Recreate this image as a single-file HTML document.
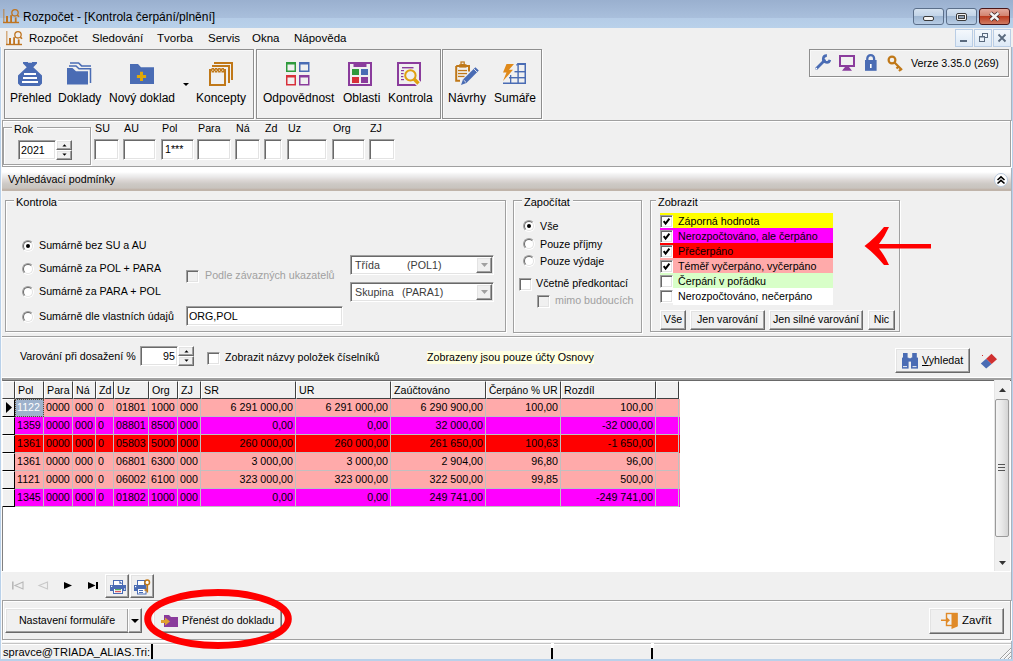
<!DOCTYPE html>
<html><head><meta charset="utf-8"><style>
*{box-sizing:border-box;margin:0;padding:0}
html,body{width:1013px;height:661px;overflow:hidden;background:#f0f0f0;font-family:"Liberation Sans",sans-serif;font-size:11px;color:#000}
.a{position:absolute}
.t{position:absolute;white-space:nowrap;line-height:13px}
svg{position:absolute;overflow:visible}
.wb{position:absolute;top:8px;height:17px;width:31px;border:1px solid #5b6f8a;border-radius:3px;background:linear-gradient(#d5e2f0,#c2d4e8 45%,#9fb7d3 50%,#b7cce4)}
.wbc{border-color:#4a1618;background:linear-gradient(#e3a99c,#d38470 45%,#bb3c20 50%,#d07b62)}
.mdi{position:absolute;top:29px;height:18px;width:18px;border:1px solid #b9cde5;background:linear-gradient(#f4f8fc,#dde9f6)}
.tg{position:absolute;border:1px solid #8e8e8e;box-shadow:inset 1px 1px 0 #f8f8f8,1px 1px 0 #fff}
.gb{position:absolute;border:1px solid #a0a0a0;box-shadow:1px 1px 0 #fff, inset 1px 1px 0 #fff}
.inp{position:absolute;background:#fff;border-top:1px solid #a0a0a0;border-left:1px solid #a0a0a0;border-right:1px solid #fff;border-bottom:1px solid #fff;box-shadow:inset 1px 1px 0 #696969}
.btn{position:absolute;background:#f0f0f0;border-top:1px solid #fff;border-left:1px solid #fff;border-right:1px solid #696969;border-bottom:1px solid #696969;box-shadow:inset -1px -1px 0 #a0a0a0}
</style></head><body>
<div class="a" style="left:0px;top:0px;width:1013px;height:28px;background:linear-gradient(#9ab0cf 0%,#a9bfdc 64%,#b5cce7 66%,#b9d1ea 100%)"></div>
<div class="a" style="left:0px;top:47px;width:1px;height:614px;background:#b9d1ea"></div>
<div class="a" style="left:1px;top:47px;width:1px;height:612px;background:#fafafa"></div>
<div class="a" style="left:1011px;top:47px;width:1px;height:612px;background:#a9b4bf"></div>
<div class="a" style="left:1012px;top:47px;width:1px;height:614px;background:#b9d1ea"></div>
<div class="a" style="left:0px;top:659px;width:1013px;height:2px;background:#b9d1ea"></div>
<svg style="left:3px;top:9px" width="17" height="14" viewBox="0 0 17 14"><g fill="#bf7420">
<rect x="0" y="0" width="1.5" height="14" opacity="0.55"/>
<rect x="0" y="12.8" width="16" height="1.4"/>
<rect x="3" y="7" width="2" height="6"/>
<rect x="7.2" y="6.2" width="1.8" height="6.8"/>
<rect x="11.8" y="8.4" width="1.8" height="4.6"/>
</g><circle cx="12" cy="3.8" r="3.2" fill="none" stroke="#bf7420" stroke-width="1.3"/><line x1="14.3" y1="6.1" x2="16" y2="7.8" stroke="#bf7420" stroke-width="1.6"/></svg>
<div class="t" style="left:23px;top:10px;font-size:12px;line-height:14px">Rozpočet - [Kontrola čerpání/plnění]</div>
<div class="wb" style="left:913px"></div><div class="wb" style="left:946px"></div><div class="wb wbc" style="left:979px"></div>
<div class="a" style="left:923px;top:16px;width:11px;height:5px;background:#f4f4f4;border:1px solid #3a3a3a;border-radius:2px"></div>
<div class="a" style="left:956px;top:13px;width:11px;height:8px;border:1px solid #3a3a3a;border-radius:2px;background:#f4f4f4"></div>
<div class="a" style="left:958px;top:15px;width:7px;height:4px;border:1px solid #444;background:#8d9db0"></div>
<svg style="left:989px;top:12px" width="11" height="9" viewBox="0 0 11 9"><path d="M1.5 1 L9.5 8 M9.5 1 L1.5 8" stroke="#3a2020" stroke-width="4"/><path d="M1.5 1 L9.5 8 M9.5 1 L1.5 8" stroke="#f4f4f4" stroke-width="2.4"/></svg>
<svg style="left:6px;top:31px" width="17" height="14" viewBox="0 0 17 14"><g fill="#bf7420">
<rect x="0" y="0" width="1.5" height="14" opacity="0.55"/>
<rect x="0" y="12.8" width="16" height="1.4"/>
<rect x="3" y="7" width="2" height="6"/>
<rect x="7.2" y="6.2" width="1.8" height="6.8"/>
<rect x="11.8" y="8.4" width="1.8" height="4.6"/>
</g><circle cx="12" cy="3.8" r="3.2" fill="none" stroke="#bf7420" stroke-width="1.3"/><line x1="14.3" y1="6.1" x2="16" y2="7.8" stroke="#bf7420" stroke-width="1.6"/></svg>
<div class="t" style="left:29px;top:31px;font-size:11.5px;line-height:14px">Rozpočet</div>
<div class="t" style="left:92px;top:31px;font-size:11.5px;line-height:14px">Sledování</div>
<div class="t" style="left:157px;top:31px;font-size:11.5px;line-height:14px">Tvorba</div>
<div class="t" style="left:208px;top:31px;font-size:11.5px;line-height:14px">Servis</div>
<div class="t" style="left:252px;top:31px;font-size:11.5px;line-height:14px">Okna</div>
<div class="t" style="left:294px;top:31px;font-size:11.5px;line-height:14px">Nápověda</div>
<div class="mdi" style="left:955px"></div><div class="mdi" style="left:974px"></div><div class="mdi" style="left:993px"></div>
<div class="a" style="left:960px;top:40px;width:7px;height:2px;background:#5a6a7e"></div>
<svg style="left:979px;top:33px" width="9" height="9" viewBox="0 0 9 9"><rect x="3.5" y="0.5" width="5" height="4" fill="none" stroke="#5a6a7e"/><rect x="0.5" y="3.5" width="5" height="5" fill="#eaf1f9" stroke="#5a6a7e"/><rect x="0" y="3" width="6" height="1.5" fill="#5a6a7e"/></svg>
<svg style="left:998px;top:34px" width="8" height="8" viewBox="0 0 8 8"><path d="M0.5 0.5 L7.5 7.5 M7.5 0.5 L0.5 7.5" stroke="#5a6a7e" stroke-width="1.8"/></svg>
<div class="tg" style="left:4px;top:49px;width:250px;height:70px"></div>
<div class="tg" style="left:256px;top:49px;width:185px;height:70px"></div>
<div class="tg" style="left:442px;top:49px;width:100px;height:70px"></div>
<svg style="left:14px;top:58px" width="32" height="32" viewBox="0 0 32 32"><path fill="#4a6cb4" d="M9 4 H14 V4.7 H18 V4 H23 V5.6 L19.3 9.3 L28 17.5 V25.5 L25.5 28 H6.5 L4 25.5 V17.5 L12.7 9.3 L9 5.6 Z"/>
<g fill="#fff"><rect x="10" y="15" width="12" height="2"/><rect x="9" y="19" width="14" height="2"/><rect x="8" y="23" width="16" height="2"/></g></svg>
<svg style="left:62px;top:58px" width="32" height="32" viewBox="0 0 32 32"><g fill="none" stroke="#4a6cb4" stroke-width="1.5"><path d="M8 4.9 H16.6 L19.6 7.9 H29"/><path d="M7 7.9 H14 L17 10.8 H28.5 V25"/></g><path d="M5 10 H10.5 L14 13.3 H26 V26.5 H5 Z" fill="#4a6cb4"/></svg>
<svg style="left:130px;top:64px" width="24" height="20" viewBox="0 0 24 20"><path d="M0 0 H8 L11 3.2 H24 V20 H0 Z" fill="#4a6cb4"/><path d="M10 7.8 H13 V10.9 H16.1 V13.9 H13 V17 H10 V13.9 H6.9 V10.9 H10 Z" fill="#e0a808"/></svg>
<svg style="left:183px;top:83px" width="6" height="3" viewBox="0 0 6 3"><path d="M0 0 H6 L3 3 Z" fill="#000"/></svg>
<svg style="left:205px;top:58px" width="32" height="32" viewBox="0 0 32 32"><g fill="none" stroke="#c07818" stroke-width="2"><rect x="5" y="12" width="15" height="15"/><path d="M7 8 H24 V25"/><path d="M9 5 H27 V22"/></g><g fill="#c07818"><rect x="6.5" y="10" width="2.6" height="4.5"/><rect x="9.8" y="10" width="2.6" height="4.5"/><rect x="13.1" y="10" width="2.6" height="4.5"/><rect x="16.4" y="10" width="2.6" height="4.5"/></g><g fill="#f0f0f0"><rect x="7.3" y="11.6" width="1" height="1.2"/><rect x="10.6" y="11.6" width="1" height="1.2"/><rect x="13.9" y="11.6" width="1" height="1.2"/><rect x="17.2" y="11.6" width="1" height="1.2"/></g></svg>
<div class="t" style="left:10px;top:91px;font-size:12px;line-height:14px">Přehled</div>
<div class="t" style="left:58px;top:91px;font-size:12px;line-height:14px">Doklady</div>
<div class="t" style="left:109px;top:91px;font-size:12px;line-height:14px">Nový doklad</div>
<div class="t" style="left:196px;top:91px;font-size:12px;line-height:14px">Koncepty</div>
<svg style="left:286px;top:62px" width="24" height="24" viewBox="0 0 24 24"><path d="M0 0 H10 V10 H0 Z M1.5 2.5 V8.5 H8.5 V2.5 Z" fill="#2e9a3c" fill-rule="evenodd"/><path d="M13 0 H23.5 V10 H13 Z M14.5 2.5 V8.5 H22.0 V2.5 Z" fill="#4a6cb4" fill-rule="evenodd"/><path d="M0 13 H10 V23.5 H0 Z M1.5 15.5 V22.0 H8.5 V15.5 Z" fill="#d8303a" fill-rule="evenodd"/><path d="M13 13 H23.5 V23.5 H13 Z M14.5 15.5 V22.0 H22.0 V15.5 Z" fill="#8a3c9c" fill-rule="evenodd"/></svg>
<svg style="left:348px;top:62px" width="24" height="24" viewBox="0 0 24 24"><rect x="1" y="1" width="22" height="22" fill="none" stroke="#8a3c9c" stroke-width="2"/><rect x="5.5" y="1" width="13" height="4" fill="#8a3c9c"/>
<rect x="4" y="7" width="7" height="6" fill="#2e9a3c"/><rect x="13" y="7" width="7" height="6" fill="#4a6cb4"/><rect x="4" y="15" width="7" height="6" fill="#d8303a"/><rect x="13" y="15" width="7" height="6" fill="#8a3c9c"/></svg>
<svg style="left:397px;top:62px" width="24" height="24" viewBox="0 0 24 24"><rect x="1" y="1" width="22" height="22" fill="none" stroke="#8a3c9c" stroke-width="2"/><g fill="#8a3c9c"><rect x="5" y="5" width="11.5" height="1.4"/><rect x="4" y="8" width="3" height="1.2"/><rect x="4" y="11" width="2.6" height="1.2"/><rect x="4" y="14" width="2.4" height="1.2"/><rect x="4" y="17" width="3" height="1.2"/></g>
<path d="M17 17 L24 24" stroke="#f0f0f0" stroke-width="6"/><circle cx="13.4" cy="13.4" r="5.2" fill="#f0f0f0" stroke="#e0a010" stroke-width="2"/><path d="M16.8 16.8 L21.5 21.5" stroke="#e0a010" stroke-width="3.4"/></svg>
<div class="t" style="left:263px;top:91px;font-size:12px;line-height:14px">Odpovědnost</div>
<div class="t" style="left:343px;top:91px;font-size:12px;line-height:14px">Oblasti</div>
<div class="t" style="left:388px;top:91px;font-size:12px;line-height:14px">Kontrola</div>
<svg style="left:451px;top:58px" width="32" height="32" viewBox="0 0 32 32"><path d="M5.2 8 H18 V13.5 M9 22.8 H5.2 V8" fill="none" stroke="#c07818" stroke-width="2"/><rect x="8.2" y="6.2" width="7.3" height="3.4" fill="#c07818"/><rect x="10" y="4" width="3.2" height="2.5" fill="none" stroke="#c07818" stroke-width="1.2"/>
<g fill="#c07818"><rect x="7" y="11.9" width="9" height="1.3"/><rect x="7" y="14.9" width="9" height="1.3"/><rect x="7" y="17.8" width="6.5" height="1.3"/></g>
<path d="M24.4 9.2 L27.8 12.6 L15.4 25 L10 27 L12 21.6 Z" fill="#4a6cb4"/><path d="M12.6 22 L15 24.4 M23 11 L26 14" stroke="#f0f0f0" stroke-width="0.9"/></svg>
<svg style="left:498px;top:58px" width="32" height="32" viewBox="0 0 32 32"><path d="M8.5 6 H16 L11 11.8 H15 L5 23 L8.5 14.5 H5 Z" fill="#e08a1a"/><g fill="#4a6cb4"><rect x="19.4" y="5" width="1.4" height="21"/><rect x="26.5" y="5" width="1.5" height="21"/><rect x="19.4" y="5" width="8.6" height="2"/><rect x="18.2" y="6.2" width="1.5" height="1.3"/><rect x="16.5" y="13" width="11.5" height="1.4"/><rect x="11" y="19" width="17" height="1.4"/><rect x="5" y="24.5" width="23" height="1.5"/><rect x="12" y="17" width="1.3" height="8.5"/></g></svg>
<div class="t" style="left:448px;top:91px;font-size:12px;line-height:14px">Návrhy</div>
<div class="t" style="left:494px;top:91px;font-size:12px;line-height:14px">Sumáře</div>
<div class="tg" style="left:809px;top:49px;width:200px;height:28px"></div>
<svg style="left:810px;top:50px" width="100" height="26" viewBox="0 0 100 26"><path d="M6.5 18.5 L14.5 10.5" stroke="#4a6cb4" stroke-width="2.8" stroke-linecap="round"/><path d="M19.9 9.9 A3.4 3.4 0 1 1 16.9 5.6" fill="none" stroke="#4a6cb4" stroke-width="2.6"/><circle cx="6.3" cy="18.7" r="0.9" fill="#fff"/>
<rect x="30" y="6" width="14" height="10" fill="none" stroke="#8a3c9c" stroke-width="2"/><path d="M35 17 H39 L42 20.8 H32 Z" fill="#8a3c9c"/>
<path d="M57.3 10.5 V8.5 A3.4 3.4 0 0 1 64.1 8.5 V10.5" fill="none" stroke="#4a6cb4" stroke-width="2.3"/><rect x="55" y="10" width="11.6" height="10.8" fill="#4a6cb4"/><rect x="60" y="14" width="1.6" height="4" fill="#fff"/>
<circle cx="82" cy="10" r="3.4" fill="none" stroke="#c07818" stroke-width="2.2"/><path d="M84.5 12.5 L92 20 M88.5 16.5 L86.5 18.5 M91 19 L89 21" stroke="#c07818" stroke-width="2.2"/></svg>
<div class="t" style="left:911px;top:56px;font-size:10.7px;line-height:14px">Verze 3.35.0 (269)</div>
<div class="a" style="left:2px;top:120px;width:1009px;height:47px;border:1px solid #a0a0a0;box-shadow:inset 1px 1px 0 #fff,1px 1px 0 #fff"></div>
<div class="gb" style="left:3px;top:127px;width:88px;height:38px"></div>
<div class="a" style="left:12px;top:122px;width:25px;height:12px;background:#f0f0f0"></div>
<div class="t" style="left:14px;top:123px;font-size:10.7px;">Rok</div>
<div class="a" style="left:18px;top:140px;width:38px;height:20px;background:#fff;border-top:1px solid #a0a0a0;border-left:1px solid #a0a0a0;border-right:1px solid #fff;border-bottom:1px solid #fff;box-shadow:inset 1px 1px 0 #696969, inset -1px -1px 0 #e3e3e3;"></div>
<div class="t" style="left:21px;top:144px;font-size:10.7px;">2021</div>
<div class="a" style="left:56px;top:140px;width:16px;height:10px;background:#f0f0f0;border-top:1px solid #fff;border-left:1px solid #fff;border-right:1px solid #696969;border-bottom:1px solid #696969;box-shadow:inset -1px -1px 0 #a0a0a0, inset 1px 1px 0 #e3e3e3;"></div>
<div class="a" style="left:56px;top:150px;width:16px;height:10px;background:#f0f0f0;border-top:1px solid #fff;border-left:1px solid #fff;border-right:1px solid #696969;border-bottom:1px solid #696969;box-shadow:inset -1px -1px 0 #a0a0a0, inset 1px 1px 0 #e3e3e3;"></div>
<svg style="left:62px;top:144px" width="5" height="3" viewBox="0 0 5 3"><path d="M2.5 0.3 L4.6 2.6 H0.4 Z" fill="#000"/></svg>
<svg style="left:62px;top:153px" width="5" height="3" viewBox="0 0 5 3"><path d="M0.4 0.4 H4.6 L2.5 2.7 Z" fill="#000"/></svg>
<div class="t" style="left:95px;top:122px;font-size:10.7px;">SU</div>
<div class="a" style="left:94px;top:139px;width:25px;height:21px;background:#fff;border-top:1px solid #a0a0a0;border-left:1px solid #a0a0a0;border-right:1px solid #fff;border-bottom:1px solid #fff;box-shadow:inset 1px 1px 0 #696969, inset -1px -1px 0 #e3e3e3;"></div>
<div class="t" style="left:124px;top:122px;font-size:10.7px;">AU</div>
<div class="a" style="left:123px;top:139px;width:33px;height:21px;background:#fff;border-top:1px solid #a0a0a0;border-left:1px solid #a0a0a0;border-right:1px solid #fff;border-bottom:1px solid #fff;box-shadow:inset 1px 1px 0 #696969, inset -1px -1px 0 #e3e3e3;"></div>
<div class="t" style="left:162px;top:122px;font-size:10.7px;">Pol</div>
<div class="a" style="left:161px;top:139px;width:33px;height:21px;background:#fff;border-top:1px solid #a0a0a0;border-left:1px solid #a0a0a0;border-right:1px solid #fff;border-bottom:1px solid #fff;box-shadow:inset 1px 1px 0 #696969, inset -1px -1px 0 #e3e3e3;"></div>
<div class="t" style="left:198px;top:122px;font-size:10.7px;">Para</div>
<div class="a" style="left:197px;top:139px;width:34px;height:21px;background:#fff;border-top:1px solid #a0a0a0;border-left:1px solid #a0a0a0;border-right:1px solid #fff;border-bottom:1px solid #fff;box-shadow:inset 1px 1px 0 #696969, inset -1px -1px 0 #e3e3e3;"></div>
<div class="t" style="left:236px;top:122px;font-size:10.7px;">Ná</div>
<div class="a" style="left:235px;top:139px;width:25px;height:21px;background:#fff;border-top:1px solid #a0a0a0;border-left:1px solid #a0a0a0;border-right:1px solid #fff;border-bottom:1px solid #fff;box-shadow:inset 1px 1px 0 #696969, inset -1px -1px 0 #e3e3e3;"></div>
<div class="t" style="left:265px;top:122px;font-size:10.7px;">Zd</div>
<div class="a" style="left:264px;top:139px;width:18px;height:21px;background:#fff;border-top:1px solid #a0a0a0;border-left:1px solid #a0a0a0;border-right:1px solid #fff;border-bottom:1px solid #fff;box-shadow:inset 1px 1px 0 #696969, inset -1px -1px 0 #e3e3e3;"></div>
<div class="t" style="left:288px;top:122px;font-size:10.7px;">Uz</div>
<div class="a" style="left:287px;top:139px;width:40px;height:21px;background:#fff;border-top:1px solid #a0a0a0;border-left:1px solid #a0a0a0;border-right:1px solid #fff;border-bottom:1px solid #fff;box-shadow:inset 1px 1px 0 #696969, inset -1px -1px 0 #e3e3e3;"></div>
<div class="t" style="left:333px;top:122px;font-size:10.7px;">Org</div>
<div class="a" style="left:332px;top:139px;width:33px;height:21px;background:#fff;border-top:1px solid #a0a0a0;border-left:1px solid #a0a0a0;border-right:1px solid #fff;border-bottom:1px solid #fff;box-shadow:inset 1px 1px 0 #696969, inset -1px -1px 0 #e3e3e3;"></div>
<div class="t" style="left:370px;top:122px;font-size:10.7px;">ZJ</div>
<div class="a" style="left:369px;top:139px;width:26px;height:21px;background:#fff;border-top:1px solid #a0a0a0;border-left:1px solid #a0a0a0;border-right:1px solid #fff;border-bottom:1px solid #fff;box-shadow:inset 1px 1px 0 #696969, inset -1px -1px 0 #e3e3e3;"></div>
<div class="t" style="left:165px;top:143px;font-size:10.7px;">1***</div>
<div class="a" style="left:2px;top:167px;width:1009px;height:24px;background:linear-gradient(#fff 0px,#fff 5px,#f4f4f4 7px,#e9e8e8 10px,#ddd8d6 13px,#cdc9c5 17px,#c8c3be 21px,#c0b4aa 22.5px,#c0b4aa 24px)"></div>
<div class="t" style="left:8px;top:173px;font-size:10.7px;">Vyhledávací podmínky</div>
<svg style="left:994px;top:173px" width="14" height="14" viewBox="0 0 14 14"><circle cx="7" cy="7" r="6.5" fill="#fff" stroke="#b8c8dc" stroke-width="1"/><path d="M3.5 7 L7 3.8 L10.5 7 M3.5 10.5 L7 7.3 L10.5 10.5" fill="none" stroke="#000" stroke-width="1.6"/></svg>
<div class="a" style="left:2px;top:191px;width:1009px;height:146px;border-bottom:1px solid #a0a0a0;box-shadow:0 1px 0 #fff"></div>
<div class="gb" style="left:5px;top:200px;width:501px;height:132px"></div>
<div class="a" style="left:14px;top:194px;width:44px;height:12px;background:#f0f0f0"></div>
<div class="t" style="left:16px;top:196px;font-size:11px;line-height:13px">Kontrola</div>
<div class="a" style="left:22px;top:240px;width:12px;height:12px;border-radius:50%;border:1px solid;border-color:#a0a0a0 #fff #fff #a0a0a0;transform:rotate(0deg)"><div style="width:10px;height:10px;border-radius:50%;border:1px solid;border-color:#696969 #e3e3e3 #e3e3e3 #696969;background:#fff"></div></div>
<div class="a" style="left:26px;top:244px;width:4px;height:4px;border-radius:50%;background:#000"></div>
<div class="t" style="left:39px;top:239px;font-size:10.7px;">Sumárně bez SU a AU</div>
<div class="a" style="left:22px;top:263px;width:12px;height:12px;border-radius:50%;border:1px solid;border-color:#a0a0a0 #fff #fff #a0a0a0;transform:rotate(0deg)"><div style="width:10px;height:10px;border-radius:50%;border:1px solid;border-color:#696969 #e3e3e3 #e3e3e3 #696969;background:#fff"></div></div>
<div class="t" style="left:39px;top:262px;font-size:10.7px;">Sumárně za POL + PARA</div>
<div class="a" style="left:22px;top:286px;width:12px;height:12px;border-radius:50%;border:1px solid;border-color:#a0a0a0 #fff #fff #a0a0a0;transform:rotate(0deg)"><div style="width:10px;height:10px;border-radius:50%;border:1px solid;border-color:#696969 #e3e3e3 #e3e3e3 #696969;background:#fff"></div></div>
<div class="t" style="left:39px;top:285px;font-size:10.7px;">Sumárně za PARA + POL</div>
<div class="a" style="left:22px;top:311px;width:12px;height:12px;border-radius:50%;border:1px solid;border-color:#a0a0a0 #fff #fff #a0a0a0;transform:rotate(0deg)"><div style="width:10px;height:10px;border-radius:50%;border:1px solid;border-color:#696969 #e3e3e3 #e3e3e3 #696969;background:#fff"></div></div>
<div class="t" style="left:39px;top:310px;font-size:10.7px;">Sumárně dle vlastních údajů</div>
<div class="a" style="left:186px;top:270px;width:13px;height:13px;background:#f0f0f0;border-top:1px solid #a0a0a0;border-left:1px solid #a0a0a0;border-right:1px solid #fff;border-bottom:1px solid #fff;box-shadow:inset 1px 1px 0 #696969, inset -1px -1px 0 #e3e3e3"></div>
<div class="t" style="left:205px;top:269px;font-size:10.7px;color:#a0a0a0">Podle závazných ukazatelů</div>
<div class="a" style="left:186px;top:306px;width:157px;height:20px;background:#fff;border-top:1px solid #a0a0a0;border-left:1px solid #a0a0a0;border-right:1px solid #fff;border-bottom:1px solid #fff;box-shadow:inset 1px 1px 0 #696969, inset -1px -1px 0 #e3e3e3;"></div>
<div class="t" style="left:189px;top:310px;font-size:10.7px;">ORG,POL</div>
<div class="a" style="left:350px;top:255px;width:144px;height:20px;background:#fff;border-top:1px solid #a0a0a0;border-left:1px solid #a0a0a0;border-right:1px solid #fff;border-bottom:1px solid #fff;box-shadow:inset 1px 1px 0 #696969, inset -1px -1px 0 #e3e3e3;"></div>
<div class="t" style="left:355px;top:259px;font-size:10.7px;color:#3c3c3c">Třída</div>
<div class="t" style="left:407px;top:259px;font-size:10.7px;color:#3c3c3c">(POL1)</div>
<div class="a" style="left:476px;top:257px;width:16px;height:16px;background:#f0f0f0;border-top:1px solid #fff;border-left:1px solid #fff;border-right:1px solid #696969;border-bottom:1px solid #696969;box-shadow:inset -1px -1px 0 #a0a0a0, inset 1px 1px 0 #e3e3e3;"></div>
<svg style="left:481px;top:263px" width="7" height="4" viewBox="0 0 7 4"><path d="M0 0 H7 L3.5 4 Z" fill="#a0a0a0"/></svg>
<div class="a" style="left:350px;top:282px;width:144px;height:20px;background:#fff;border-top:1px solid #a0a0a0;border-left:1px solid #a0a0a0;border-right:1px solid #fff;border-bottom:1px solid #fff;box-shadow:inset 1px 1px 0 #696969, inset -1px -1px 0 #e3e3e3;"></div>
<div class="t" style="left:355px;top:286px;font-size:10.7px;color:#3c3c3c">Skupina</div>
<div class="t" style="left:402px;top:286px;font-size:10.7px;color:#3c3c3c">(PARA1)</div>
<div class="a" style="left:476px;top:284px;width:16px;height:16px;background:#f0f0f0;border-top:1px solid #fff;border-left:1px solid #fff;border-right:1px solid #696969;border-bottom:1px solid #696969;box-shadow:inset -1px -1px 0 #a0a0a0, inset 1px 1px 0 #e3e3e3;"></div>
<svg style="left:481px;top:290px" width="7" height="4" viewBox="0 0 7 4"><path d="M0 0 H7 L3.5 4 Z" fill="#a0a0a0"/></svg>
<div class="gb" style="left:513px;top:200px;width:129px;height:133px"></div>
<div class="a" style="left:522px;top:194px;width:51px;height:12px;background:#f0f0f0"></div>
<div class="t" style="left:524px;top:196px;font-size:11px;line-height:13px">Započítat</div>
<div class="a" style="left:523px;top:220px;width:12px;height:12px;border-radius:50%;border:1px solid;border-color:#a0a0a0 #fff #fff #a0a0a0;transform:rotate(0deg)"><div style="width:10px;height:10px;border-radius:50%;border:1px solid;border-color:#696969 #e3e3e3 #e3e3e3 #696969;background:#fff"></div></div>
<div class="a" style="left:527px;top:224px;width:4px;height:4px;border-radius:50%;background:#000"></div>
<div class="t" style="left:540px;top:220px;font-size:10.7px;">Vše</div>
<div class="a" style="left:523px;top:238px;width:12px;height:12px;border-radius:50%;border:1px solid;border-color:#a0a0a0 #fff #fff #a0a0a0;transform:rotate(0deg)"><div style="width:10px;height:10px;border-radius:50%;border:1px solid;border-color:#696969 #e3e3e3 #e3e3e3 #696969;background:#fff"></div></div>
<div class="t" style="left:540px;top:238px;font-size:10.7px;">Pouze příjmy</div>
<div class="a" style="left:523px;top:255px;width:12px;height:12px;border-radius:50%;border:1px solid;border-color:#a0a0a0 #fff #fff #a0a0a0;transform:rotate(0deg)"><div style="width:10px;height:10px;border-radius:50%;border:1px solid;border-color:#696969 #e3e3e3 #e3e3e3 #696969;background:#fff"></div></div>
<div class="t" style="left:540px;top:255px;font-size:10.7px;">Pouze výdaje</div>
<div class="a" style="left:519px;top:278px;width:13px;height:13px;background:#fff;border-top:1px solid #a0a0a0;border-left:1px solid #a0a0a0;border-right:1px solid #fff;border-bottom:1px solid #fff;box-shadow:inset 1px 1px 0 #696969, inset -1px -1px 0 #e3e3e3"></div>
<div class="t" style="left:536px;top:277px;font-size:10.7px;">Včetně předkontací</div>
<div class="a" style="left:537px;top:295px;width:13px;height:13px;background:#f0f0f0;border-top:1px solid #a0a0a0;border-left:1px solid #a0a0a0;border-right:1px solid #fff;border-bottom:1px solid #fff;box-shadow:inset 1px 1px 0 #696969, inset -1px -1px 0 #e3e3e3"></div>
<div class="t" style="left:555px;top:294px;font-size:10.7px;color:#a0a0a0">mimo budoucích</div>
<div class="gb" style="left:650px;top:200px;width:250px;height:132px"></div>
<div class="a" style="left:656px;top:194px;width:44px;height:12px;background:#f0f0f0"></div>
<div class="t" style="left:658px;top:196px;font-size:11px;line-height:13px">Zobrazit</div>
<div class="a" style="left:660px;top:213px;width:173px;height:15px;background:#ffff00"></div>
<div class="a" style="left:660px;top:215px;width:13px;height:13px;background:#f0f0f0"></div>
<div class="a" style="left:660px;top:215px;width:13px;height:13px;background:#fff;border-top:1px solid #a0a0a0;border-left:1px solid #a0a0a0;border-right:1px solid #fff;border-bottom:1px solid #fff;box-shadow:inset 1px 1px 0 #696969, inset -1px -1px 0 #e3e3e3"></div>
<svg style="left:663px;top:218px" width="7" height="7" viewBox="0 0 7 7"><path d="M0.7 3.2 L2.6 5.6 L6.4 0.6" fill="none" stroke="#000" stroke-width="2"/></svg>
<div class="t" style="left:678px;top:215px;font-size:10.7px;">Záporná hodnota</div>
<div class="a" style="left:660px;top:228px;width:173px;height:15px;background:#ff00ff"></div>
<div class="a" style="left:660px;top:230px;width:13px;height:13px;background:#f0f0f0"></div>
<div class="a" style="left:660px;top:230px;width:13px;height:13px;background:#fff;border-top:1px solid #a0a0a0;border-left:1px solid #a0a0a0;border-right:1px solid #fff;border-bottom:1px solid #fff;box-shadow:inset 1px 1px 0 #696969, inset -1px -1px 0 #e3e3e3"></div>
<svg style="left:663px;top:233px" width="7" height="7" viewBox="0 0 7 7"><path d="M0.7 3.2 L2.6 5.6 L6.4 0.6" fill="none" stroke="#000" stroke-width="2"/></svg>
<div class="t" style="left:678px;top:230px;font-size:10.7px;">Nerozpočtováno, ale čerpáno</div>
<div class="a" style="left:660px;top:243px;width:173px;height:15px;background:#ff0000"></div>
<div class="a" style="left:660px;top:245px;width:13px;height:13px;background:#f0f0f0"></div>
<div class="a" style="left:660px;top:245px;width:13px;height:13px;background:#fff;border-top:1px solid #a0a0a0;border-left:1px solid #a0a0a0;border-right:1px solid #fff;border-bottom:1px solid #fff;box-shadow:inset 1px 1px 0 #696969, inset -1px -1px 0 #e3e3e3"></div>
<svg style="left:663px;top:248px" width="7" height="7" viewBox="0 0 7 7"><path d="M0.7 3.2 L2.6 5.6 L6.4 0.6" fill="none" stroke="#000" stroke-width="2"/></svg>
<div class="t" style="left:678px;top:245px;font-size:10.7px;">Přečerpáno</div>
<div class="a" style="left:660px;top:258px;width:173px;height:15px;background:#ffaaaa"></div>
<div class="a" style="left:660px;top:260px;width:13px;height:13px;background:#f0f0f0"></div>
<div class="a" style="left:660px;top:260px;width:13px;height:13px;background:#fff;border-top:1px solid #a0a0a0;border-left:1px solid #a0a0a0;border-right:1px solid #fff;border-bottom:1px solid #fff;box-shadow:inset 1px 1px 0 #696969, inset -1px -1px 0 #e3e3e3"></div>
<svg style="left:663px;top:263px" width="7" height="7" viewBox="0 0 7 7"><path d="M0.7 3.2 L2.6 5.6 L6.4 0.6" fill="none" stroke="#000" stroke-width="2"/></svg>
<div class="t" style="left:678px;top:260px;font-size:10.7px;">Téměř vyčerpáno, vyčerpáno</div>
<div class="a" style="left:660px;top:273px;width:173px;height:15px;background:#d8ffc8"></div>
<div class="a" style="left:660px;top:275px;width:13px;height:13px;background:#f0f0f0"></div>
<div class="a" style="left:660px;top:275px;width:13px;height:13px;background:#fff;border-top:1px solid #a0a0a0;border-left:1px solid #a0a0a0;border-right:1px solid #fff;border-bottom:1px solid #fff;box-shadow:inset 1px 1px 0 #696969, inset -1px -1px 0 #e3e3e3"></div>
<div class="t" style="left:678px;top:275px;font-size:10.7px;">Čerpání v pořádku</div>
<div class="a" style="left:660px;top:288px;width:173px;height:17px;background:#ffffff"></div>
<div class="a" style="left:660px;top:290px;width:13px;height:15px;background:#f0f0f0"></div>
<div class="a" style="left:660px;top:290px;width:13px;height:13px;background:#fff;border-top:1px solid #a0a0a0;border-left:1px solid #a0a0a0;border-right:1px solid #fff;border-bottom:1px solid #fff;box-shadow:inset 1px 1px 0 #696969, inset -1px -1px 0 #e3e3e3"></div>
<div class="t" style="left:678px;top:290px;font-size:10.7px;">Nerozpočtováno, nečerpáno</div>
<div class="a" style="left:660px;top:310px;width:26px;height:20px;background:#f0f0f0;border-top:1px solid #fff;border-left:1px solid #fff;border-right:1px solid #696969;border-bottom:1px solid #696969;box-shadow:inset -1px -1px 0 #a0a0a0, inset 1px 1px 0 #e3e3e3;"></div>
<div class="t" style="left:660px;top:313px;font-size:10.7px;width:26px;text-align:center">Vše</div>
<div class="a" style="left:690px;top:310px;width:75px;height:20px;background:#f0f0f0;border-top:1px solid #fff;border-left:1px solid #fff;border-right:1px solid #696969;border-bottom:1px solid #696969;box-shadow:inset -1px -1px 0 #a0a0a0, inset 1px 1px 0 #e3e3e3;"></div>
<div class="t" style="left:690px;top:313px;font-size:10.7px;width:75px;text-align:center">Jen varování</div>
<div class="a" style="left:769px;top:310px;width:94px;height:20px;background:#f0f0f0;border-top:1px solid #fff;border-left:1px solid #fff;border-right:1px solid #696969;border-bottom:1px solid #696969;box-shadow:inset -1px -1px 0 #a0a0a0, inset 1px 1px 0 #e3e3e3;"></div>
<div class="t" style="left:769px;top:313px;font-size:10.7px;width:94px;text-align:center">Jen silné varování</div>
<div class="a" style="left:868px;top:310px;width:27px;height:20px;background:#f0f0f0;border-top:1px solid #fff;border-left:1px solid #fff;border-right:1px solid #696969;border-bottom:1px solid #696969;box-shadow:inset -1px -1px 0 #a0a0a0, inset 1px 1px 0 #e3e3e3;"></div>
<div class="t" style="left:868px;top:313px;font-size:10.7px;width:27px;text-align:center">Nic</div>
<svg style="left:864px;top:227px" width="67" height="38" viewBox="0 0 67 38"><path d="M0.5 19 Q11 11 20 0 H25 Q21 9 15 17 H67 V21.5 H15 Q21 29 25 38 H20 Q11 27 0.5 19 Z" fill="#ff0000"/></svg>
<div class="t" style="left:20px;top:350px;font-size:10.7px;">Varování při dosažení %</div>
<div class="a" style="left:140px;top:346px;width:38px;height:20px;background:#fff;border-top:1px solid #a0a0a0;border-left:1px solid #a0a0a0;border-right:1px solid #fff;border-bottom:1px solid #fff;box-shadow:inset 1px 1px 0 #696969, inset -1px -1px 0 #e3e3e3;"></div>
<div class="t" style="left:141px;top:350px;font-size:10.7px;width:34px;text-align:right">95</div>
<div class="a" style="left:178px;top:346px;width:16px;height:10px;background:#f0f0f0;border-top:1px solid #fff;border-left:1px solid #fff;border-right:1px solid #696969;border-bottom:1px solid #696969;box-shadow:inset -1px -1px 0 #a0a0a0, inset 1px 1px 0 #e3e3e3;"></div>
<div class="a" style="left:178px;top:356px;width:16px;height:10px;background:#f0f0f0;border-top:1px solid #fff;border-left:1px solid #fff;border-right:1px solid #696969;border-bottom:1px solid #696969;box-shadow:inset -1px -1px 0 #a0a0a0, inset 1px 1px 0 #e3e3e3;"></div>
<svg style="left:184px;top:350px" width="5" height="3" viewBox="0 0 5 3"><path d="M2.5 0.3 L4.6 2.6 H0.4 Z" fill="#000"/></svg>
<svg style="left:184px;top:359px" width="5" height="3" viewBox="0 0 5 3"><path d="M0.4 0.4 H4.6 L2.5 2.7 Z" fill="#000"/></svg>
<div class="a" style="left:207px;top:352px;width:13px;height:13px;background:#fff;border-top:1px solid #a0a0a0;border-left:1px solid #a0a0a0;border-right:1px solid #fff;border-bottom:1px solid #fff;box-shadow:inset 1px 1px 0 #696969, inset -1px -1px 0 #e3e3e3"></div>
<div class="t" style="left:225px;top:351px;font-size:10.7px;">Zobrazit názvy položek číselníků</div>
<div class="a" style="left:427px;top:351px;width:167px;height:13px;background:#ffffe1"></div>
<div class="t" style="left:427px;top:351px;font-size:10.7px;">Zobrazeny jsou pouze účty Osnovy</div>
<div class="a" style="left:895px;top:348px;width:75px;height:25px;background:#f0f0f0;border-top:1px solid #fff;border-left:1px solid #fff;border-right:1px solid #696969;border-bottom:1px solid #696969;box-shadow:inset -1px -1px 0 #a0a0a0, inset 1px 1px 0 #e3e3e3;"></div>
<svg style="left:902px;top:353px" width="16" height="16" viewBox="0 0 16 16"><g fill="#4a6cb4"><rect x="1" y="0" width="4.6" height="5"/><rect x="10.2" y="0" width="4.6" height="5"/><rect x="0" y="4.6" width="6.6" height="11"/><rect x="9" y="4.6" width="7" height="11"/><rect x="6" y="5.2" width="3.5" height="3.4"/></g><g fill="#fff"><rect x="1" y="13.2" width="4" height="0.9"/><rect x="10.5" y="13.2" width="4" height="0.9"/></g></svg>
<div class="t" style="left:922px;top:354px;font-size:10.7px;"><u>V</u>yhledat</div>
<svg style="left:980px;top:353px" width="18" height="16" viewBox="0 0 18 16"><path d="M0.8 10.5 L6.2 5.7 L11.6 10.9 L6.2 15.5 Z" fill="#4a6cb4"/><path d="M6.2 5.7 L11.5 0.8 L17 6.2 L11.6 10.9 Z" fill="#d03030"/><rect x="2" y="2" width="1" height="1" fill="#d03030"/></svg>
<div class="a" style="left:2px;top:377px;width:1009px;height:1px;background:#fff"></div>
<div class="a" style="left:2px;top:378px;width:1009px;height:194px;background:#fff;border-top:2px solid #a0a0a0;border-left:1px solid #808080;box-shadow:inset 0 1px 0 #696969"></div>
<div class="a" style="left:2px;top:381px;width:13px;height:18px;background:#f0f0f0;border-top:1px solid #fff;border-left:1px solid #fff;border-right:1px solid #404040;border-bottom:1px solid #404040"></div>
<div class="a" style="left:15px;top:381px;width:29px;height:18px;background:#f0f0f0;border-top:1px solid #fff;border-left:1px solid #fff;border-right:1px solid #404040;border-bottom:1px solid #404040"></div>
<div class="t" style="left:18px;top:384px;font-size:10.7px;">Pol</div>
<div class="a" style="left:44px;top:381px;width:29px;height:18px;background:#f0f0f0;border-top:1px solid #fff;border-left:1px solid #fff;border-right:1px solid #404040;border-bottom:1px solid #404040"></div>
<div class="t" style="left:47px;top:384px;font-size:10.7px;">Para</div>
<div class="a" style="left:73px;top:381px;width:23px;height:18px;background:#f0f0f0;border-top:1px solid #fff;border-left:1px solid #fff;border-right:1px solid #404040;border-bottom:1px solid #404040"></div>
<div class="t" style="left:76px;top:384px;font-size:10.7px;">Ná</div>
<div class="a" style="left:96px;top:381px;width:18px;height:18px;background:#f0f0f0;border-top:1px solid #fff;border-left:1px solid #fff;border-right:1px solid #404040;border-bottom:1px solid #404040"></div>
<div class="t" style="left:99px;top:384px;font-size:10.7px;">Zd</div>
<div class="a" style="left:114px;top:381px;width:35px;height:18px;background:#f0f0f0;border-top:1px solid #fff;border-left:1px solid #fff;border-right:1px solid #404040;border-bottom:1px solid #404040"></div>
<div class="t" style="left:117px;top:384px;font-size:10.7px;">Uz</div>
<div class="a" style="left:149px;top:381px;width:29px;height:18px;background:#f0f0f0;border-top:1px solid #fff;border-left:1px solid #fff;border-right:1px solid #404040;border-bottom:1px solid #404040"></div>
<div class="t" style="left:152px;top:384px;font-size:10.7px;">Org</div>
<div class="a" style="left:178px;top:381px;width:23px;height:18px;background:#f0f0f0;border-top:1px solid #fff;border-left:1px solid #fff;border-right:1px solid #404040;border-bottom:1px solid #404040"></div>
<div class="t" style="left:181px;top:384px;font-size:10.7px;">ZJ</div>
<div class="a" style="left:201px;top:381px;width:95px;height:18px;background:#f0f0f0;border-top:1px solid #fff;border-left:1px solid #fff;border-right:1px solid #404040;border-bottom:1px solid #404040"></div>
<div class="t" style="left:204px;top:384px;font-size:10.7px;">SR</div>
<div class="a" style="left:296px;top:381px;width:95px;height:18px;background:#f0f0f0;border-top:1px solid #fff;border-left:1px solid #fff;border-right:1px solid #404040;border-bottom:1px solid #404040"></div>
<div class="t" style="left:299px;top:384px;font-size:10.7px;">UR</div>
<div class="a" style="left:391px;top:381px;width:95px;height:18px;background:#f0f0f0;border-top:1px solid #fff;border-left:1px solid #fff;border-right:1px solid #404040;border-bottom:1px solid #404040"></div>
<div class="t" style="left:394px;top:384px;font-size:10.7px;">Zaúčtováno</div>
<div class="a" style="left:486px;top:381px;width:75px;height:18px;background:#f0f0f0;border-top:1px solid #fff;border-left:1px solid #fff;border-right:1px solid #404040;border-bottom:1px solid #404040"></div>
<div class="t" style="left:489px;top:384px;font-size:10.2px;">Čerpáno % UR</div>
<div class="a" style="left:561px;top:381px;width:95px;height:18px;background:#f0f0f0;border-top:1px solid #fff;border-left:1px solid #fff;border-right:1px solid #404040;border-bottom:1px solid #404040"></div>
<div class="t" style="left:564px;top:384px;font-size:10.7px;">Rozdíl</div>
<div class="a" style="left:656px;top:381px;width:23px;height:18px;background:#f0f0f0;border-top:1px solid #fff;border-left:1px solid #fff;border-right:1px solid #404040;border-bottom:1px solid #404040"></div>
<div class="a" style="left:2px;top:399px;width:13px;height:18px;background:#f0f0f0;border-top:1px solid #fff;border-left:1px solid #fff;border-right:1px solid #000;border-bottom:1px solid #000"></div>
<div class="a" style="left:15px;top:399px;width:665px;height:18px;background:#ffaaaa"></div>
<div class="a" style="left:15px;top:399px;width:29px;height:18px;border-right:1px solid #c0c0c0;border-bottom:1px solid #c0c0c0"></div>
<div class="a" style="left:15px;top:399px;width:29px;height:18px;background:#9eb2cc;outline:1px dotted #5a4a30;outline-offset:-1px"></div>
<div class="t" style="left:17px;top:401px;font-size:10.7px;color:#fff">1122</div>
<div class="a" style="left:44px;top:399px;width:29px;height:18px;border-right:1px solid #c0c0c0;border-bottom:1px solid #c0c0c0"></div>
<div class="t" style="left:46px;top:401px;font-size:10.7px;">0000</div>
<div class="a" style="left:73px;top:399px;width:23px;height:18px;border-right:1px solid #c0c0c0;border-bottom:1px solid #c0c0c0"></div>
<div class="t" style="left:75px;top:401px;font-size:10.7px;">000</div>
<div class="a" style="left:96px;top:399px;width:18px;height:18px;border-right:1px solid #c0c0c0;border-bottom:1px solid #c0c0c0"></div>
<div class="t" style="left:98px;top:401px;font-size:10.7px;">0</div>
<div class="a" style="left:114px;top:399px;width:35px;height:18px;border-right:1px solid #c0c0c0;border-bottom:1px solid #c0c0c0"></div>
<div class="t" style="left:116px;top:401px;font-size:10.7px;">01801</div>
<div class="a" style="left:149px;top:399px;width:29px;height:18px;border-right:1px solid #c0c0c0;border-bottom:1px solid #c0c0c0"></div>
<div class="t" style="left:151px;top:401px;font-size:10.7px;">1000</div>
<div class="a" style="left:178px;top:399px;width:23px;height:18px;border-right:1px solid #c0c0c0;border-bottom:1px solid #c0c0c0"></div>
<div class="t" style="left:180px;top:401px;font-size:10.7px;">000</div>
<div class="a" style="left:201px;top:399px;width:95px;height:18px;border-right:1px solid #c0c0c0;border-bottom:1px solid #c0c0c0"></div>
<div class="t" style="left:201px;top:401px;font-size:10.7px;width:92px;text-align:right">6 291 000,00</div>
<div class="a" style="left:296px;top:399px;width:95px;height:18px;border-right:1px solid #c0c0c0;border-bottom:1px solid #c0c0c0"></div>
<div class="t" style="left:296px;top:401px;font-size:10.7px;width:92px;text-align:right">6 291 000,00</div>
<div class="a" style="left:391px;top:399px;width:95px;height:18px;border-right:1px solid #c0c0c0;border-bottom:1px solid #c0c0c0"></div>
<div class="t" style="left:391px;top:401px;font-size:10.7px;width:92px;text-align:right">6 290 900,00</div>
<div class="a" style="left:486px;top:399px;width:75px;height:18px;border-right:1px solid #c0c0c0;border-bottom:1px solid #c0c0c0"></div>
<div class="t" style="left:486px;top:401px;font-size:10.7px;width:72px;text-align:right">100,00</div>
<div class="a" style="left:561px;top:399px;width:95px;height:18px;border-right:1px solid #c0c0c0;border-bottom:1px solid #c0c0c0"></div>
<div class="t" style="left:561px;top:401px;font-size:10.7px;width:92px;text-align:right">100,00</div>
<div class="a" style="left:656px;top:399px;width:23px;height:18px;border-right:1px solid #c0c0c0;border-bottom:1px solid #c0c0c0"></div>
<div class="a" style="left:2px;top:417px;width:13px;height:18px;background:#f0f0f0;border-top:1px solid #fff;border-left:1px solid #fff;border-right:1px solid #000;border-bottom:1px solid #000"></div>
<div class="a" style="left:15px;top:417px;width:665px;height:18px;background:#ff00ff"></div>
<div class="a" style="left:15px;top:417px;width:29px;height:18px;border-right:1px solid #c0c0c0;border-bottom:1px solid #c0c0c0"></div>
<div class="t" style="left:17px;top:419px;font-size:10.7px;">1359</div>
<div class="a" style="left:44px;top:417px;width:29px;height:18px;border-right:1px solid #c0c0c0;border-bottom:1px solid #c0c0c0"></div>
<div class="t" style="left:46px;top:419px;font-size:10.7px;">0000</div>
<div class="a" style="left:73px;top:417px;width:23px;height:18px;border-right:1px solid #c0c0c0;border-bottom:1px solid #c0c0c0"></div>
<div class="t" style="left:75px;top:419px;font-size:10.7px;">000</div>
<div class="a" style="left:96px;top:417px;width:18px;height:18px;border-right:1px solid #c0c0c0;border-bottom:1px solid #c0c0c0"></div>
<div class="t" style="left:98px;top:419px;font-size:10.7px;">0</div>
<div class="a" style="left:114px;top:417px;width:35px;height:18px;border-right:1px solid #c0c0c0;border-bottom:1px solid #c0c0c0"></div>
<div class="t" style="left:116px;top:419px;font-size:10.7px;">08801</div>
<div class="a" style="left:149px;top:417px;width:29px;height:18px;border-right:1px solid #c0c0c0;border-bottom:1px solid #c0c0c0"></div>
<div class="t" style="left:151px;top:419px;font-size:10.7px;">8500</div>
<div class="a" style="left:178px;top:417px;width:23px;height:18px;border-right:1px solid #c0c0c0;border-bottom:1px solid #c0c0c0"></div>
<div class="t" style="left:180px;top:419px;font-size:10.7px;">000</div>
<div class="a" style="left:201px;top:417px;width:95px;height:18px;border-right:1px solid #c0c0c0;border-bottom:1px solid #c0c0c0"></div>
<div class="t" style="left:201px;top:419px;font-size:10.7px;width:92px;text-align:right">0,00</div>
<div class="a" style="left:296px;top:417px;width:95px;height:18px;border-right:1px solid #c0c0c0;border-bottom:1px solid #c0c0c0"></div>
<div class="t" style="left:296px;top:419px;font-size:10.7px;width:92px;text-align:right">0,00</div>
<div class="a" style="left:391px;top:417px;width:95px;height:18px;border-right:1px solid #c0c0c0;border-bottom:1px solid #c0c0c0"></div>
<div class="t" style="left:391px;top:419px;font-size:10.7px;width:92px;text-align:right">32 000,00</div>
<div class="a" style="left:486px;top:417px;width:75px;height:18px;border-right:1px solid #c0c0c0;border-bottom:1px solid #c0c0c0"></div>
<div class="a" style="left:561px;top:417px;width:95px;height:18px;border-right:1px solid #c0c0c0;border-bottom:1px solid #c0c0c0"></div>
<div class="t" style="left:561px;top:419px;font-size:10.7px;width:92px;text-align:right">-32 000,00</div>
<div class="a" style="left:656px;top:417px;width:23px;height:18px;border-right:1px solid #c0c0c0;border-bottom:1px solid #c0c0c0"></div>
<div class="a" style="left:2px;top:435px;width:13px;height:18px;background:#f0f0f0;border-top:1px solid #fff;border-left:1px solid #fff;border-right:1px solid #000;border-bottom:1px solid #000"></div>
<div class="a" style="left:15px;top:435px;width:665px;height:18px;background:#ff0000"></div>
<div class="a" style="left:15px;top:435px;width:29px;height:18px;border-right:1px solid #c0c0c0;border-bottom:1px solid #c0c0c0"></div>
<div class="t" style="left:17px;top:437px;font-size:10.7px;">1361</div>
<div class="a" style="left:44px;top:435px;width:29px;height:18px;border-right:1px solid #c0c0c0;border-bottom:1px solid #c0c0c0"></div>
<div class="t" style="left:46px;top:437px;font-size:10.7px;">0000</div>
<div class="a" style="left:73px;top:435px;width:23px;height:18px;border-right:1px solid #c0c0c0;border-bottom:1px solid #c0c0c0"></div>
<div class="t" style="left:75px;top:437px;font-size:10.7px;">000</div>
<div class="a" style="left:96px;top:435px;width:18px;height:18px;border-right:1px solid #c0c0c0;border-bottom:1px solid #c0c0c0"></div>
<div class="t" style="left:98px;top:437px;font-size:10.7px;">0</div>
<div class="a" style="left:114px;top:435px;width:35px;height:18px;border-right:1px solid #c0c0c0;border-bottom:1px solid #c0c0c0"></div>
<div class="t" style="left:116px;top:437px;font-size:10.7px;">05803</div>
<div class="a" style="left:149px;top:435px;width:29px;height:18px;border-right:1px solid #c0c0c0;border-bottom:1px solid #c0c0c0"></div>
<div class="t" style="left:151px;top:437px;font-size:10.7px;">5000</div>
<div class="a" style="left:178px;top:435px;width:23px;height:18px;border-right:1px solid #c0c0c0;border-bottom:1px solid #c0c0c0"></div>
<div class="t" style="left:180px;top:437px;font-size:10.7px;">000</div>
<div class="a" style="left:201px;top:435px;width:95px;height:18px;border-right:1px solid #c0c0c0;border-bottom:1px solid #c0c0c0"></div>
<div class="t" style="left:201px;top:437px;font-size:10.7px;width:92px;text-align:right">260 000,00</div>
<div class="a" style="left:296px;top:435px;width:95px;height:18px;border-right:1px solid #c0c0c0;border-bottom:1px solid #c0c0c0"></div>
<div class="t" style="left:296px;top:437px;font-size:10.7px;width:92px;text-align:right">260 000,00</div>
<div class="a" style="left:391px;top:435px;width:95px;height:18px;border-right:1px solid #c0c0c0;border-bottom:1px solid #c0c0c0"></div>
<div class="t" style="left:391px;top:437px;font-size:10.7px;width:92px;text-align:right">261 650,00</div>
<div class="a" style="left:486px;top:435px;width:75px;height:18px;border-right:1px solid #c0c0c0;border-bottom:1px solid #c0c0c0"></div>
<div class="t" style="left:486px;top:437px;font-size:10.7px;width:72px;text-align:right">100,63</div>
<div class="a" style="left:561px;top:435px;width:95px;height:18px;border-right:1px solid #c0c0c0;border-bottom:1px solid #c0c0c0"></div>
<div class="t" style="left:561px;top:437px;font-size:10.7px;width:92px;text-align:right">-1 650,00</div>
<div class="a" style="left:656px;top:435px;width:23px;height:18px;border-right:1px solid #c0c0c0;border-bottom:1px solid #c0c0c0"></div>
<div class="a" style="left:2px;top:453px;width:13px;height:18px;background:#f0f0f0;border-top:1px solid #fff;border-left:1px solid #fff;border-right:1px solid #000;border-bottom:1px solid #000"></div>
<div class="a" style="left:15px;top:453px;width:665px;height:18px;background:#ffaaaa"></div>
<div class="a" style="left:15px;top:453px;width:29px;height:18px;border-right:1px solid #c0c0c0;border-bottom:1px solid #c0c0c0"></div>
<div class="t" style="left:17px;top:455px;font-size:10.7px;">1361</div>
<div class="a" style="left:44px;top:453px;width:29px;height:18px;border-right:1px solid #c0c0c0;border-bottom:1px solid #c0c0c0"></div>
<div class="t" style="left:46px;top:455px;font-size:10.7px;">0000</div>
<div class="a" style="left:73px;top:453px;width:23px;height:18px;border-right:1px solid #c0c0c0;border-bottom:1px solid #c0c0c0"></div>
<div class="t" style="left:75px;top:455px;font-size:10.7px;">000</div>
<div class="a" style="left:96px;top:453px;width:18px;height:18px;border-right:1px solid #c0c0c0;border-bottom:1px solid #c0c0c0"></div>
<div class="t" style="left:98px;top:455px;font-size:10.7px;">0</div>
<div class="a" style="left:114px;top:453px;width:35px;height:18px;border-right:1px solid #c0c0c0;border-bottom:1px solid #c0c0c0"></div>
<div class="t" style="left:116px;top:455px;font-size:10.7px;">06801</div>
<div class="a" style="left:149px;top:453px;width:29px;height:18px;border-right:1px solid #c0c0c0;border-bottom:1px solid #c0c0c0"></div>
<div class="t" style="left:151px;top:455px;font-size:10.7px;">6300</div>
<div class="a" style="left:178px;top:453px;width:23px;height:18px;border-right:1px solid #c0c0c0;border-bottom:1px solid #c0c0c0"></div>
<div class="t" style="left:180px;top:455px;font-size:10.7px;">000</div>
<div class="a" style="left:201px;top:453px;width:95px;height:18px;border-right:1px solid #c0c0c0;border-bottom:1px solid #c0c0c0"></div>
<div class="t" style="left:201px;top:455px;font-size:10.7px;width:92px;text-align:right">3 000,00</div>
<div class="a" style="left:296px;top:453px;width:95px;height:18px;border-right:1px solid #c0c0c0;border-bottom:1px solid #c0c0c0"></div>
<div class="t" style="left:296px;top:455px;font-size:10.7px;width:92px;text-align:right">3 000,00</div>
<div class="a" style="left:391px;top:453px;width:95px;height:18px;border-right:1px solid #c0c0c0;border-bottom:1px solid #c0c0c0"></div>
<div class="t" style="left:391px;top:455px;font-size:10.7px;width:92px;text-align:right">2 904,00</div>
<div class="a" style="left:486px;top:453px;width:75px;height:18px;border-right:1px solid #c0c0c0;border-bottom:1px solid #c0c0c0"></div>
<div class="t" style="left:486px;top:455px;font-size:10.7px;width:72px;text-align:right">96,80</div>
<div class="a" style="left:561px;top:453px;width:95px;height:18px;border-right:1px solid #c0c0c0;border-bottom:1px solid #c0c0c0"></div>
<div class="t" style="left:561px;top:455px;font-size:10.7px;width:92px;text-align:right">96,00</div>
<div class="a" style="left:656px;top:453px;width:23px;height:18px;border-right:1px solid #c0c0c0;border-bottom:1px solid #c0c0c0"></div>
<div class="a" style="left:2px;top:471px;width:13px;height:18px;background:#f0f0f0;border-top:1px solid #fff;border-left:1px solid #fff;border-right:1px solid #000;border-bottom:1px solid #000"></div>
<div class="a" style="left:15px;top:471px;width:665px;height:18px;background:#ffaaaa"></div>
<div class="a" style="left:15px;top:471px;width:29px;height:18px;border-right:1px solid #c0c0c0;border-bottom:1px solid #c0c0c0"></div>
<div class="t" style="left:17px;top:473px;font-size:10.7px;">1121</div>
<div class="a" style="left:44px;top:471px;width:29px;height:18px;border-right:1px solid #c0c0c0;border-bottom:1px solid #c0c0c0"></div>
<div class="t" style="left:46px;top:473px;font-size:10.7px;">0000</div>
<div class="a" style="left:73px;top:471px;width:23px;height:18px;border-right:1px solid #c0c0c0;border-bottom:1px solid #c0c0c0"></div>
<div class="t" style="left:75px;top:473px;font-size:10.7px;">000</div>
<div class="a" style="left:96px;top:471px;width:18px;height:18px;border-right:1px solid #c0c0c0;border-bottom:1px solid #c0c0c0"></div>
<div class="t" style="left:98px;top:473px;font-size:10.7px;">0</div>
<div class="a" style="left:114px;top:471px;width:35px;height:18px;border-right:1px solid #c0c0c0;border-bottom:1px solid #c0c0c0"></div>
<div class="t" style="left:116px;top:473px;font-size:10.7px;">06002</div>
<div class="a" style="left:149px;top:471px;width:29px;height:18px;border-right:1px solid #c0c0c0;border-bottom:1px solid #c0c0c0"></div>
<div class="t" style="left:151px;top:473px;font-size:10.7px;">6100</div>
<div class="a" style="left:178px;top:471px;width:23px;height:18px;border-right:1px solid #c0c0c0;border-bottom:1px solid #c0c0c0"></div>
<div class="t" style="left:180px;top:473px;font-size:10.7px;">000</div>
<div class="a" style="left:201px;top:471px;width:95px;height:18px;border-right:1px solid #c0c0c0;border-bottom:1px solid #c0c0c0"></div>
<div class="t" style="left:201px;top:473px;font-size:10.7px;width:92px;text-align:right">323 000,00</div>
<div class="a" style="left:296px;top:471px;width:95px;height:18px;border-right:1px solid #c0c0c0;border-bottom:1px solid #c0c0c0"></div>
<div class="t" style="left:296px;top:473px;font-size:10.7px;width:92px;text-align:right">323 000,00</div>
<div class="a" style="left:391px;top:471px;width:95px;height:18px;border-right:1px solid #c0c0c0;border-bottom:1px solid #c0c0c0"></div>
<div class="t" style="left:391px;top:473px;font-size:10.7px;width:92px;text-align:right">322 500,00</div>
<div class="a" style="left:486px;top:471px;width:75px;height:18px;border-right:1px solid #c0c0c0;border-bottom:1px solid #c0c0c0"></div>
<div class="t" style="left:486px;top:473px;font-size:10.7px;width:72px;text-align:right">99,85</div>
<div class="a" style="left:561px;top:471px;width:95px;height:18px;border-right:1px solid #c0c0c0;border-bottom:1px solid #c0c0c0"></div>
<div class="t" style="left:561px;top:473px;font-size:10.7px;width:92px;text-align:right">500,00</div>
<div class="a" style="left:656px;top:471px;width:23px;height:18px;border-right:1px solid #c0c0c0;border-bottom:1px solid #c0c0c0"></div>
<div class="a" style="left:2px;top:489px;width:13px;height:18px;background:#f0f0f0;border-top:1px solid #fff;border-left:1px solid #fff;border-right:1px solid #000;border-bottom:1px solid #000"></div>
<div class="a" style="left:15px;top:489px;width:665px;height:18px;background:#ff00ff"></div>
<div class="a" style="left:15px;top:489px;width:29px;height:18px;border-right:1px solid #c0c0c0;border-bottom:1px solid #c0c0c0"></div>
<div class="t" style="left:17px;top:491px;font-size:10.7px;">1345</div>
<div class="a" style="left:44px;top:489px;width:29px;height:18px;border-right:1px solid #c0c0c0;border-bottom:1px solid #c0c0c0"></div>
<div class="t" style="left:46px;top:491px;font-size:10.7px;">0000</div>
<div class="a" style="left:73px;top:489px;width:23px;height:18px;border-right:1px solid #c0c0c0;border-bottom:1px solid #c0c0c0"></div>
<div class="t" style="left:75px;top:491px;font-size:10.7px;">000</div>
<div class="a" style="left:96px;top:489px;width:18px;height:18px;border-right:1px solid #c0c0c0;border-bottom:1px solid #c0c0c0"></div>
<div class="t" style="left:98px;top:491px;font-size:10.7px;">0</div>
<div class="a" style="left:114px;top:489px;width:35px;height:18px;border-right:1px solid #c0c0c0;border-bottom:1px solid #c0c0c0"></div>
<div class="t" style="left:116px;top:491px;font-size:10.7px;">01802</div>
<div class="a" style="left:149px;top:489px;width:29px;height:18px;border-right:1px solid #c0c0c0;border-bottom:1px solid #c0c0c0"></div>
<div class="t" style="left:151px;top:491px;font-size:10.7px;">1000</div>
<div class="a" style="left:178px;top:489px;width:23px;height:18px;border-right:1px solid #c0c0c0;border-bottom:1px solid #c0c0c0"></div>
<div class="t" style="left:180px;top:491px;font-size:10.7px;">000</div>
<div class="a" style="left:201px;top:489px;width:95px;height:18px;border-right:1px solid #c0c0c0;border-bottom:1px solid #c0c0c0"></div>
<div class="t" style="left:201px;top:491px;font-size:10.7px;width:92px;text-align:right">0,00</div>
<div class="a" style="left:296px;top:489px;width:95px;height:18px;border-right:1px solid #c0c0c0;border-bottom:1px solid #c0c0c0"></div>
<div class="t" style="left:296px;top:491px;font-size:10.7px;width:92px;text-align:right">0,00</div>
<div class="a" style="left:391px;top:489px;width:95px;height:18px;border-right:1px solid #c0c0c0;border-bottom:1px solid #c0c0c0"></div>
<div class="t" style="left:391px;top:491px;font-size:10.7px;width:92px;text-align:right">249 741,00</div>
<div class="a" style="left:486px;top:489px;width:75px;height:18px;border-right:1px solid #c0c0c0;border-bottom:1px solid #c0c0c0"></div>
<div class="a" style="left:561px;top:489px;width:95px;height:18px;border-right:1px solid #c0c0c0;border-bottom:1px solid #c0c0c0"></div>
<div class="t" style="left:561px;top:491px;font-size:10.7px;width:92px;text-align:right">-249 741,00</div>
<div class="a" style="left:656px;top:489px;width:23px;height:18px;border-right:1px solid #c0c0c0;border-bottom:1px solid #c0c0c0"></div>
<svg style="left:6px;top:402px" width="6" height="11" viewBox="0 0 6 11"><path d="M0 0 L6 5.5 L0 11 Z" fill="#000"/></svg>
<div class="a" style="left:994px;top:380px;width:16px;height:191px;background:#f0f0f0;border-left:1px solid #e6e6e6"></div>
<svg style="left:999px;top:388px" width="7" height="4" viewBox="0 0 7 4"><path d="M3.5 0 L7 4 H0 Z" fill="#333"/></svg>
<svg style="left:999px;top:561px" width="7" height="4" viewBox="0 0 7 4"><path d="M0 0 H7 L3.5 4 Z" fill="#333"/></svg>
<div class="a" style="left:995px;top:399px;width:14px;height:138px;background:linear-gradient(90deg,#f4f4f4,#e8e8e8 50%,#d4d4d4);border:1px solid #9a9a9a;border-radius:2px"></div>
<div class="a" style="left:998px;top:464px;width:7px;height:1px;background:#555"></div>
<div class="a" style="left:998px;top:467px;width:7px;height:1px;background:#555"></div>
<div class="a" style="left:998px;top:470px;width:7px;height:1px;background:#555"></div>
<div class="a" style="left:2px;top:571px;width:1009px;height:1px;background:#fff"></div>
<svg style="left:12px;top:581px" width="12" height="9" viewBox="0 0 12 9"><rect x="0" y="0.5" width="1.6" height="8" fill="#b8b8b8"/><path d="M11 1 L3 4.5 L11 8 Z" fill="none" stroke="#b8b8b8" stroke-width="1.1"/></svg>
<svg style="left:38px;top:581px" width="10" height="9" viewBox="0 0 10 9"><path d="M9.5 1 L1 4.5 L9.5 8 Z" fill="none" stroke="#c8c8c8" stroke-width="1.1"/></svg>
<svg style="left:64px;top:582px" width="8" height="7" viewBox="0 0 8 7"><path d="M0 0 L8 3.5 L0 7 Z" fill="#000"/></svg>
<svg style="left:88px;top:582px" width="10" height="7" viewBox="0 0 10 7"><path d="M0 0 L7.5 3.5 L0 7 Z" fill="#000"/><rect x="8" y="0" width="2" height="7" fill="#000"/></svg>
<div class="a" style="left:105px;top:574px;width:24px;height:24px;background:#f0f0f0;border-top:1px solid #fff;border-left:1px solid #fff;border-right:1px solid #696969;border-bottom:1px solid #696969;box-shadow:inset -1px -1px 0 #a0a0a0, inset 1px 1px 0 #e3e3e3;"></div>
<div class="a" style="left:130px;top:574px;width:24px;height:24px;background:#f0f0f0;border-top:1px solid #fff;border-left:1px solid #fff;border-right:1px solid #696969;border-bottom:1px solid #696969;box-shadow:inset -1px -1px 0 #a0a0a0, inset 1px 1px 0 #e3e3e3;"></div>
<svg style="left:110px;top:580px" width="16" height="14" viewBox="0 0 16 14"><rect x="3.5" y="0.5" width="9" height="5" fill="#fff" stroke="#4a6cb4"/><path d="M9.3 0.5 L12.5 3.7 H9.3 Z" fill="#4a6cb4"/><rect x="0" y="5" width="16" height="6" fill="#4a6cb4"/><rect x="1" y="5.8" width="1.2" height="1.2" fill="#fff"/><rect x="14" y="8.5" width="1.2" height="1.2" fill="#fff"/><rect x="3.5" y="8.5" width="9" height="5" fill="#fff" stroke="#4a6cb4"/><rect x="5" y="9.2" width="6" height="1" fill="#2e9a3c"/><rect x="5" y="11.2" width="6" height="1" fill="#d8303a"/></svg>
<svg style="left:134px;top:579px" width="16" height="16" viewBox="0 0 16 16"><rect x="3.5" y="1.5" width="7" height="5" fill="#fff" stroke="#4a6cb4"/><rect x="0" y="6" width="12.5" height="6" fill="#4a6cb4"/><rect x="1" y="7" width="1.2" height="1.2" fill="#fff"/><rect x="3.5" y="9.5" width="8.5" height="5.5" fill="#fff" stroke="#4a6cb4"/><rect x="5" y="11" width="4" height="1" fill="#4a6cb4"/><rect x="5" y="13" width="4" height="1" fill="#4a6cb4"/><circle cx="13.2" cy="3.4" r="2.3" fill="#fff" stroke="#c07818" stroke-width="1.5"/><rect x="12.5" y="5.5" width="1.6" height="8" fill="#c07818"/><rect x="10.5" y="10.2" width="2.2" height="1.6" fill="#c07818"/></svg>
<div class="a" style="left:2px;top:600px;width:1009px;height:40px;border:1px solid #a0a0a0;box-shadow:inset 1px 1px 0 #fff,1px 1px 0 #fff"></div>
<div class="a" style="left:5px;top:608px;width:124px;height:25px;background:#f0f0f0;border-top:1px solid #fff;border-left:1px solid #fff;border-right:1px solid #696969;border-bottom:1px solid #696969;box-shadow:inset -1px -1px 0 #a0a0a0, inset 1px 1px 0 #e3e3e3;"></div>
<div class="t" style="left:5px;top:614px;font-size:10.7px;width:124px;text-align:center">Nastavení formuláře</div>
<div class="a" style="left:128px;top:608px;width:14px;height:25px;background:#f0f0f0;border-top:1px solid #fff;border-left:1px solid #fff;border-right:1px solid #696969;border-bottom:1px solid #696969;box-shadow:inset -1px -1px 0 #a0a0a0, inset 1px 1px 0 #e3e3e3;"></div>
<svg style="left:131px;top:619px" width="8" height="4" viewBox="0 0 8 4"><path d="M0 0 H8 L4 4 Z" fill="#000"/></svg>
<div class="a" style="left:153px;top:608px;width:129px;height:25px;background:#f0f0f0;border-top:1px solid #fff;border-left:1px solid #fff;border-right:1px solid #696969;border-bottom:1px solid #696969;box-shadow:inset -1px -1px 0 #a0a0a0, inset 1px 1px 0 #e3e3e3;"></div>
<svg style="left:161px;top:615px" width="17" height="12" viewBox="0 0 17 12"><path d="M3 0 H8 L10 2 H17 V12 H3 Z" fill="#8a3c9c"/><path d="M0 5 H4 V2.5 L9 6.5 L4 10.5 V8 H0 Z" fill="#e0a030"/></svg>
<div class="t" style="left:182px;top:614px;font-size:10.7px;">Přenést do dokladu</div>
<div class="a" style="left:929px;top:608px;width:75px;height:26px;background:#f0f0f0;border-top:1px solid #fff;border-left:1px solid #fff;border-right:1px solid #696969;border-bottom:1px solid #696969;box-shadow:inset -1px -1px 0 #a0a0a0, inset 1px 1px 0 #e3e3e3;"></div>
<svg style="left:941px;top:612px" width="18" height="18" viewBox="0 0 18 18"><rect x="5.5" y="1.5" width="10.5" height="12" fill="none" stroke="#e08a28" stroke-width="1.4"/><path d="M10.5 2 L16.5 1 V14.5 L10.5 17 Z" fill="#e08a28"/><path d="M0 7.5 H6 V5.5 L9 8.2 L6 11 V9 H0 Z" fill="#e08a28"/></svg>
<div class="t" style="left:962px;top:614px;font-size:11.5px;">Zavřít</div>
<div class="a" style="left:2px;top:641px;width:1009px;height:1px;background:#fff"></div>
<div class="a" style="left:2px;top:643px;width:1009px;height:1px;background:#c4c4c4"></div>
<div class="a" style="left:2px;top:644px;width:1009px;height:1px;background:#fff"></div>
<div class="t" style="left:3px;top:646px;font-size:11.1px;">spravce@TRIADA_ALIAS.Tri:</div>
<div class="a" style="left:151px;top:644px;width:2px;height:15px;background:#000"></div>
<div class="a" style="left:551px;top:643px;width:3px;height:5px;background:#fff"></div>
<div class="a" style="left:551px;top:648px;width:2px;height:11px;background:#000"></div>
<div class="a" style="left:651px;top:643px;width:3px;height:5px;background:#fff"></div>
<div class="a" style="left:651px;top:648px;width:2px;height:11px;background:#000"></div>
<svg style="left:998px;top:646px" width="14" height="14" viewBox="0 0 14 14"><path d="M13 2 L2 13 M13 6 L6 13 M13 10 L10 13" stroke="#a0a0a0" stroke-width="1"/><path d="M13 3 L3 13 M13 7 L7 13 M13 11 L11 13" stroke="#fff" stroke-width="1"/></svg>
<svg style="left:144px;top:589px" width="148" height="60" viewBox="0 0 148 60"><ellipse cx="74" cy="30" rx="70.3" ry="26.4" fill="none" stroke="#ff0000" stroke-width="7"/></svg>
</body></html>
